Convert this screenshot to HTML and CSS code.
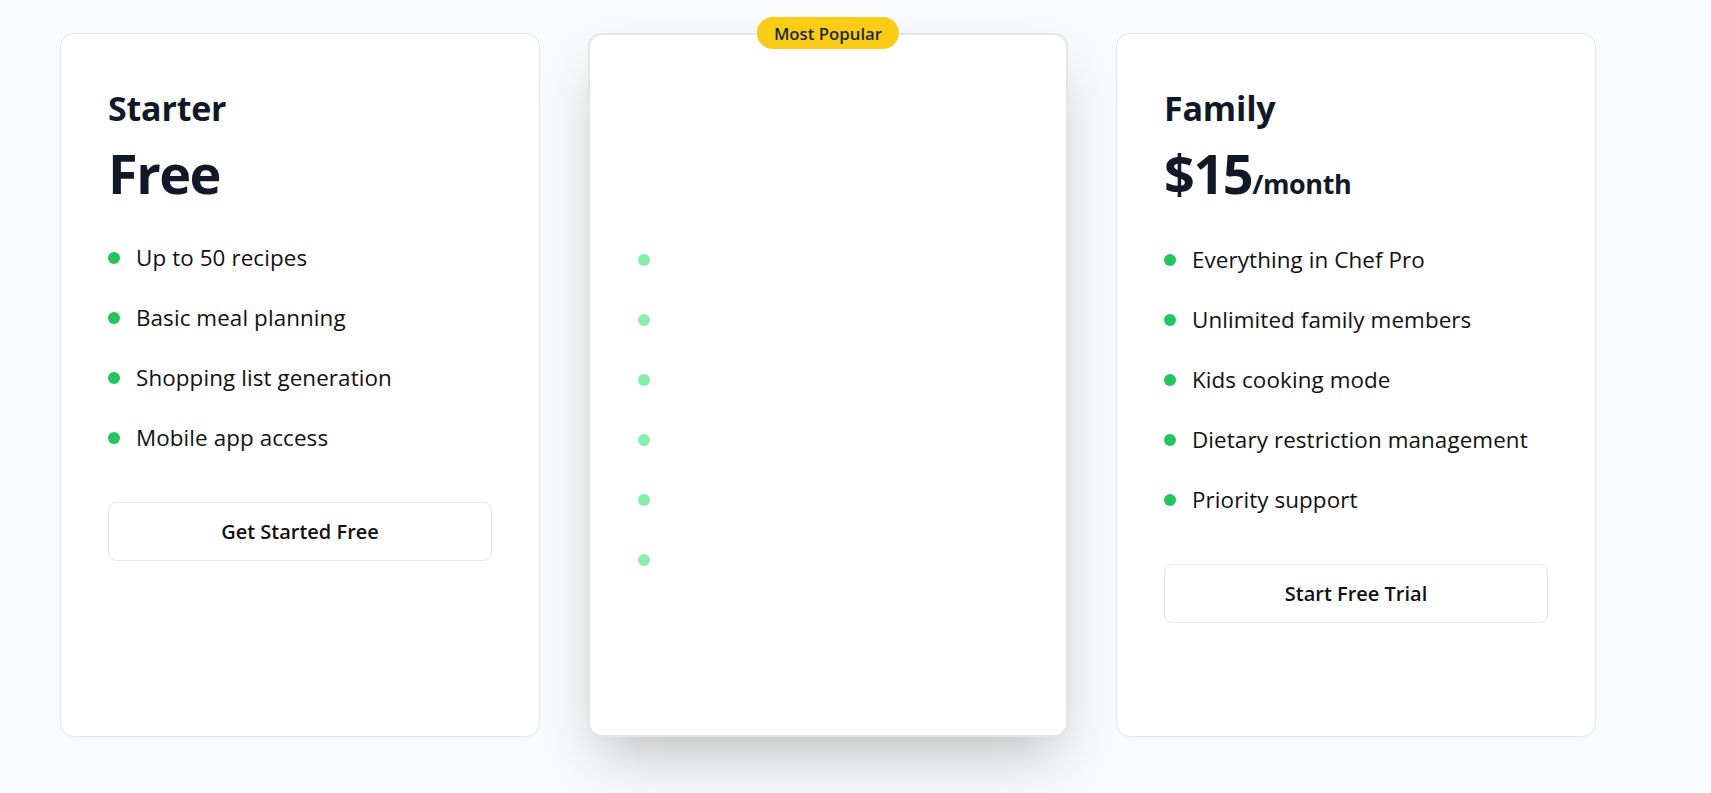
FILE: index.html
```html
<!DOCTYPE html>
<html lang="en">
<head>
<meta charset="utf-8">
<title>Pricing</title>
<link rel="stylesheet" href="styles.css">
</head>
<body>
<main class="plans">
  <section class="card">
    <h2 class="card-title">Starter</h2>
    <p class="price">Free</p>
    <ul class="features">
      <li class="feature"><span class="dot"></span>Up to 50 recipes</li>
      <li class="feature"><span class="dot"></span>Basic meal planning</li>
      <li class="feature"><span class="dot"></span>Shopping list generation</li>
      <li class="feature"><span class="dot"></span>Mobile app access</li>
    </ul>
    <button class="btn">Get Started Free</button>
  </section>

  <section class="card card--featured">
    <span class="badge">Most Popular</span>
    <h2 class="card-title">Chef Pro</h2>
    <p class="price">$9<span class="period">/month</span></p>
    <ul class="features">
      <li class="feature"><span class="dot"></span>Unlimited recipes</li>
      <li class="feature"><span class="dot"></span>Advanced meal planning</li>
      <li class="feature"><span class="dot"></span>Nutrition tracking</li>
      <li class="feature"><span class="dot"></span>Recipe import from web</li>
      <li class="feature"><span class="dot"></span>Smart shopping lists</li>
      <li class="feature"><span class="dot"></span>Offline access</li>
    </ul>
    <button class="btn">Start Free Trial</button>
  </section>

  <section class="card">
    <h2 class="card-title">Family</h2>
    <p class="price">$15<span class="period">/month</span></p>
    <ul class="features">
      <li class="feature"><span class="dot"></span>Everything in Chef Pro</li>
      <li class="feature"><span class="dot"></span>Unlimited family members</li>
      <li class="feature"><span class="dot"></span>Kids cooking mode</li>
      <li class="feature"><span class="dot"></span>Dietary restriction management</li>
      <li class="feature"><span class="dot"></span>Priority support</li>
    </ul>
    <button class="btn">Start Free Trial</button>
  </section>
</main>
</body>
</html>
```

FILE: styles.css
```css
* {
  box-sizing: border-box;
}

html,
body {
  min-height: 100%;
}

body {
  margin: 0;
  background: #f9fafb;
  font-family: "Open Sans", "Noto Sans", sans-serif;
  color: #111827;
}

.plans {
  display: grid;
  grid-template-columns: repeat(3, 480px);
  column-gap: 48px;
  padding: 33px 0 60px 60px;
  align-items: stretch;
}

.card {
  position: relative;
  background: #ffffff;
  border: 1px solid #e5e7eb;
  border-radius: 14px;
  padding: 53px 47px 52px;
  box-shadow: 0 1px 2px rgba(0, 0, 0, 0.03);
}

.card--featured {
  border: 2.4px solid #e5e5e5;
  padding: 52px 48px 52px;
  box-shadow: 0 28px 56px -14px rgba(0, 0, 0, 0.25);
  color: #ffffff;
}

.badge {
  position: absolute;
  top: -2px;
  left: 50%;
  transform: translate(-50%, -50%);
  height: 32px;
  padding: 0 17px;
  display: flex;
  align-items: center;
  border-radius: 999px;
  background: #facc15;
  color: #1f2937;
  font-size: 16.8px;
  font-weight: 600;
  white-space: nowrap;
}

.card-title {
  margin: 0;
  font-size: 34px;
  line-height: 43px;
  font-weight: 700;
  letter-spacing: -0.2px;
}

.price {
  margin: 15px 0 0;
  font-size: 54px;
  line-height: 57.6px;
  font-weight: 700;
  letter-spacing: -1.5px;
}

.period {
  font-size: 27px;
  line-height: 41.6px;
  letter-spacing: -0.4px;
}

.features {
  list-style: none;
  margin: 38px 0 0;
  padding: 0;
  display: flex;
  flex-direction: column;
  gap: 26px;
}

.feature {
  display: flex;
  align-items: center;
  height: 34px;
  font-size: 22.4px;
  letter-spacing: 0.1px;
  color: #111111;
}

.card--featured .feature {
  color: #ffffff;
}

.dot {
  flex: none;
  width: 12px;
  height: 12px;
  margin-right: 16px;
  border-radius: 50%;
  background: #22c55e;
}

.card--featured .dot {
  background: #86efac;
}

.btn {
  display: block;
  width: 100%;
  height: 59px;
  margin-top: 47px;
  border: 1px solid #e5e7eb;
  border-radius: 8px;
  background: #ffffff;
  font-family: inherit;
  font-size: 20px;
  font-weight: 600;
  color: #111111;
}

.card--featured .btn {
  border-color: #ffffff;
  color: #ffffff;
}
```
